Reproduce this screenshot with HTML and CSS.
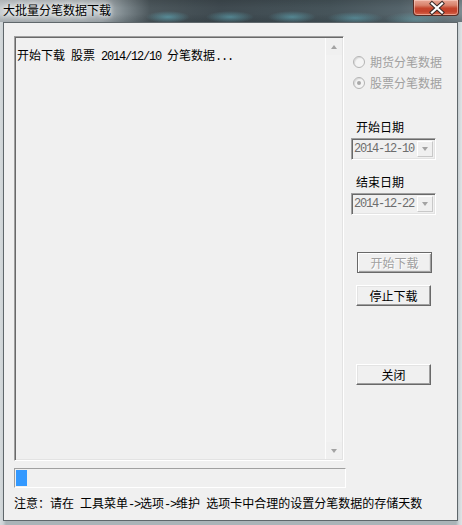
FILE: index.html
```html
<!DOCTYPE html>
<html lang="zh-CN">
<head>
<meta charset="utf-8">
<title>大批量分笔数据下载</title>
<link rel="stylesheet" href="styles.css">
</head>
<body>
<div class="window">
  <div class="titlebar">
    <div class="title">大批量分笔数据下载</div>
    <div class="close">
      <svg width="46" height="16" viewBox="0 0 46 16">
        <path d="M18 3.5 L28 12.5 M28 3.5 L18 12.5" stroke="#3a2a28" stroke-width="4.2" stroke-linecap="square" fill="none"/>
        <path d="M18 3.5 L28 12.5 M28 3.5 L18 12.5" stroke="#ffffff" stroke-width="2.2" stroke-linecap="square" fill="none"/>
      </svg>
    </div>
  </div>
  <div class="client">
    <div class="main">
      <div class="memo">
        <div class="memo-text">开始下载<span class="a"> </span>股票<span class="a"> 2014/12/10 </span>分笔数据<span class="a">...</span></div>
        <div class="vscroll">
          <div class="sbtn"><span class="tri-up"></span></div>
          <div class="strack"></div>
          <div class="sbtn"><span class="tri-down"></span></div>
        </div>
      </div>
      <div class="side">
        <div class="radio-row">
          <span class="radio"></span>
          <span class="radio-label">期货分笔数据</span>
        </div>
        <div class="radio-row">
          <span class="radio checked"></span>
          <span class="radio-label">股票分笔数据</span>
        </div>
        <div class="field-label first">开始日期</div>
        <div class="combo">
          <span class="combo-text a">2014-12-10</span>
          <span class="combo-btn"><span class="tri-down"></span></span>
        </div>
        <div class="field-label">结束日期</div>
        <div class="combo">
          <span class="combo-text a">2014-12-22</span>
          <span class="combo-btn"><span class="tri-down"></span></span>
        </div>
        <div class="btn btn-default disabled">开始下载</div>
        <div class="btn btn-stop">停止下载</div>
        <div class="btn btn-close">关闭</div>
      </div>
    </div>
    <div class="progress"><div class="chunk"></div></div>
    <div class="note">注意：请在<span class="a"> </span>工具菜单<span class="a">-&gt;</span>选项<span class="a">-&gt;</span>维护<span class="a"> </span>选项卡中合理的设置分笔数据的存储天数</div>
  </div>
</div>
</body>
</html>
```
FILE: styles.css
```css
* { box-sizing: border-box; }
html, body { margin: 0; padding: 0; }
body {
  width: 462px;
  height: 525px;
  overflow: hidden;
  font-family: "Noto Sans CJK SC", sans-serif;
  font-size: 12px;
  color: #000;
  background: #b9c3c8;
}
.a {
  font-family: "Liberation Mono", monospace;
  font-size: 12px;
  letter-spacing: -1.2px;
  white-space: pre;
}
.window {
  width: 462px;
  height: 525px;
  display: flex;
  flex-direction: column;
  background: linear-gradient(to right, #d5dadc 0, #ccd2d5 3px, #aab4b8 6px, #aab4b8 456px, #cfd6d9 459px, #dfe4e6 462px);
}
.titlebar {
  height: 22px;
  flex: none;
  display: flex;
  justify-content: space-between;
  background:
    radial-gradient(ellipse 22px 6px at 168px 17px, rgba(95,165,180,0.7), rgba(95,165,180,0) 100%),
    radial-gradient(ellipse 24px 6px at 230px 17px, rgba(95,165,180,0.65), rgba(95,165,180,0) 100%),
    radial-gradient(ellipse 24px 6px at 292px 17px, rgba(95,165,180,0.65), rgba(95,165,180,0) 100%),
    radial-gradient(ellipse 28px 6px at 355px 18px, rgba(95,165,180,0.6), rgba(95,165,180,0) 100%),
    radial-gradient(ellipse 30px 7px at 415px 19px, rgba(110,175,185,0.5), rgba(110,175,185,0) 100%),
    linear-gradient(to bottom, rgba(0,0,0,0.12) 0, rgba(0,0,0,0) 8px, rgba(0,0,0,0) 14px, rgba(20,30,35,0.2) 22px),
    linear-gradient(to right, #c8cdd0 0, #c3c9cc 70px, #b5bcc0 100px, #7c878c 125px, #4c575c 150px, #3f4a50 220px, #46545a 330px, #55646b 400px, #7d8a90 462px);
}
.title {
  padding: 3px 0 0 3px;
  line-height: 14px;
  font-size: 12px;
  color: #000;
  text-shadow: 0 0 4px #fff, 0 0 6px rgba(255,255,255,0.8);
}
.close {
  width: 46px;
  height: 16px;
  margin-right: 3px;
  border: 1px solid #5b2b22;
  border-top: none;
  border-radius: 0 0 4px 4px;
  background: linear-gradient(to bottom, #e9a796 0, #d9826c 35%, #c5452c 55%, #c4412b 75%, #d7684c 100%);
  box-shadow: inset 0 0 0 1px rgba(255,220,210,0.5);
}
.close svg { display: block; }
.client {
  flex: 1;
  margin: 0 4px 4px 3px;
  background: #f0f0f0;
  border: 1px solid #5f676b;
  padding: 13px 0 0 10px;
  display: flex;
  flex-direction: column;
}
.main {
  display: flex;
  align-items: flex-start;
}
.memo {
  width: 330px;
  height: 425px;
  display: flex;
  border: 1px solid;
  border-color: #a0a0a0 #ffffff #ffffff #a0a0a0;
  box-shadow: inset 1px 1px 0 #696969, inset -1px -1px 0 #e3e3e3;
  padding: 1px;
  background: #f0f0f0;
}
.memo-text {
  flex: 1;
  padding: 10px 0 0 1px;
  line-height: 14px;
  white-space: nowrap;
}
.vscroll {
  width: 17px;
  display: flex;
  flex-direction: column;
  border-left: 1px solid #fcfcfc;
  background: #f0f0f0;
}
.sbtn {
  height: 17px;
  display: flex;
  align-items: center;
  justify-content: center;
}
.strack { flex: 1; background: #f2f2f2; }
.tri-up, .tri-down {
  width: 0;
  height: 0;
  border-left: 3.5px solid transparent;
  border-right: 3.5px solid transparent;
}
.tri-up { border-bottom: 4px solid #a3a3a3; }
.tri-down { border-top: 4px solid #a3a3a3; }
.side {
  margin-left: 7px;
  padding-top: 15px;
  display: flex;
  flex-direction: column;
  align-items: flex-start;
}
.radio-row {
  height: 21px;
  display: flex;
  align-items: center;
  margin-left: 2px;
}
.radio {
  width: 12px;
  height: 12px;
  border-radius: 50%;
  border: 1px solid #b4b4b4;
  background: #f4f4f4;
  box-shadow: inset 1px 1px 1px #d8d8d8;
  position: relative;
}
.radio.checked::after {
  content: "";
  position: absolute;
  left: 3px;
  top: 3px;
  width: 4px;
  height: 4px;
  border-radius: 50%;
  background: #a8a8a8;
}
.radio-label {
  margin-left: 5px;
  color: #a0a0a0;
  line-height: 14px;
}
.field-label {
  margin: 15px 0 0 5px;
  line-height: 14px;
}
.field-label.first { margin-top: 27px; }
.combo {
  margin-top: 4px;
  width: 85px;
  height: 22px;
  display: flex;
  align-items: center;
  border: 1px solid;
  border-color: #a0a0a0 #ffffff #ffffff #a0a0a0;
  box-shadow: inset 1px 1px 0 #696969, inset -1px -1px 0 #e3e3e3;
  padding: 2px;
  background: #f0f0f0;
}
.combo-text {
  flex: 1;
  color: #6d6d6d;
  line-height: 14px;
}
.combo-btn {
  width: 16px;
  height: 16px;
  display: flex;
  align-items: center;
  justify-content: center;
  border: 1px solid;
  border-color: #ffffff #c8c8c8 #c8c8c8 #ffffff;
  background: #f0f0f0;
}
.btn {
  width: 75px;
  height: 21px;
  display: flex;
  align-items: center;
  justify-content: center;
  line-height: 14px;
  border: 1px solid;
  border-color: #ffffff #696969 #696969 #ffffff;
  box-shadow: inset -1px -1px 0 #a0a0a0, inset 1px 1px 0 #e3e3e3;
  background: #f0f0f0;
}
.btn-default {
  margin: 37px 0 0 6px;
  border-color: #696969;
  box-shadow: inset 1px 1px 0 #ffffff, inset -1px -1px 0 #a0a0a0, inset -2px -2px 0 #e3e3e3;
}
.btn.disabled {
  color: #a0a0a0;
  text-shadow: 1px 1px 0 #ffffff;
}
.btn-stop { margin: 12px 0 0 5px; }
.btn-close { margin: 58px 0 0 5px; }
.progress {
  margin-top: 7px;
  width: 332px;
  height: 20px;
  border: 1px solid;
  border-color: #a0a0a0 #ffffff #ffffff #a0a0a0;
  padding: 1px;
  background: #f0f0f0;
}
.chunk {
  width: 11px;
  height: 16px;
  background: #3399ff;
}
.note {
  margin-top: 8px;
  line-height: 14px;
  white-space: nowrap;
}
```
